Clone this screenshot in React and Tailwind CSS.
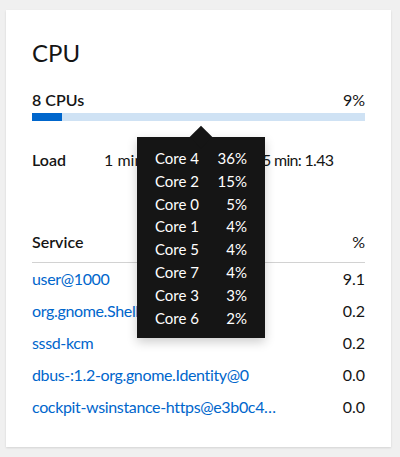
import React from 'react';

const services = [
  { name: 'user@1000', value: '9.1' },
  { name: 'org.gnome.Shell@wayland', value: '0.2' },
  { name: 'sssd-kcm', value: '0.2' },
  { name: 'dbus-:1.2-org.gnome.Identity@0', value: '0.0' },
  { name: 'cockpit-wsinstance-https@e3b0c4…', value: '0.0' },
];

const cores = [
  ['Core 4', '36%'],
  ['Core 2', '15%'],
  ['Core 0', '5%'],
  ['Core 1', '4%'],
  ['Core 5', '4%'],
  ['Core 7', '4%'],
  ['Core 3', '3%'],
  ['Core 6', '2%'],
];

const CoreTooltip = () => (
  <div className="absolute left-[131px] top-[127px] w-[128px] bg-[#151515] text-white shadow-[0_4px_10px_rgba(3,3,3,0.2)] px-[18px] pt-[10px] pb-[9px]">
    <div className="absolute left-[56px] -top-[8px] w-4 h-4 rotate-45 bg-[#151515]" />
    <div className="relative grid grid-cols-[1fr_auto] text-[15px] leading-[22.8px]">
      {cores.map(([core, pct]) => (
        <React.Fragment key={core}>
          <span>{core}</span>
          <span className="text-right">{pct}</span>
        </React.Fragment>
      ))}
    </div>
  </div>
);

export default function App() {
  return (
    <div className="w-[400px] h-[457px] bg-[#f0f0f0] pt-[10px] pl-[6px] font-['Lato',sans-serif] text-[#151515]">
      <div className="relative w-[385px] h-[437px] bg-white shadow-[0_1px_2px_rgba(3,3,3,0.12)] px-[26px] pt-[28px]">
        <h2 className="text-[24px] leading-[30px]">CPU</h2>

        <div className="mt-[20px] flex justify-between text-[16px] leading-[24px]">
          <span className="font-semibold">8 CPUs</span>
          <span>9%</span>
        </div>
        <div className="mt-px h-2 bg-[#cfe2f4]">
          <div className="h-full w-[9%] bg-[#0066cc]" />
        </div>

        <div className="mt-[27px] flex text-[16px] leading-[24px]">
          <span className="w-[72px] font-semibold">Load</span>
          <span className="w-[158px]">1 min: 1.62,</span>
          <span className="tracking-[-0.7px]">5 min: 1.43</span>
        </div>

        <div className="mt-[58px] text-[16px] leading-[24px]">
          <div className="flex justify-between pb-2 border-b border-[#d2d2d2]">
            <span className="font-semibold">Service</span>
            <span>%</span>
          </div>
          {services.map((s) => (
            <div key={s.name} className="flex justify-between items-center h-8">
              <a className="text-[#0066cc] whitespace-nowrap tracking-[-0.35px]">{s.name}</a>
              <span>{s.value}</span>
            </div>
          ))}
        </div>

        <CoreTooltip />
      </div>
    </div>
  );
}
